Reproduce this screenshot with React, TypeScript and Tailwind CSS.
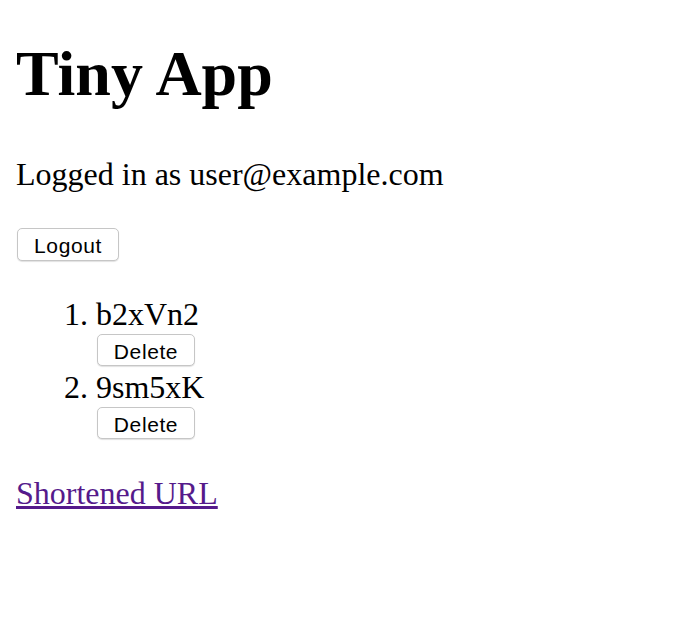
export default function App() {
  const urls = ['b2xVn2', '9sm5xK'];

  return (
    <div className="min-h-screen bg-white px-4 text-black font-['Liberation_Serif',serif] text-[32px] leading-[37px]">
      <h1 className="pt-[37px] text-[64px] font-bold leading-[74px]">Tiny App</h1>

      <p className="mt-[45px]">Logged in as user@example.com</p>

      <button className="mt-[35px] ml-px block h-[33px] w-[102px] rounded-[5px] border border-[#c6c6c6] bg-white pt-[2px] font-['Liberation_Sans',sans-serif] text-[21px] leading-none tracking-[0.6px] text-black shadow-[0_1px_1px_rgba(0,0,0,0.12)]">
        Logout
      </button>

      <ol className="mt-[35px] list-decimal pl-[80px]">
        {urls.map((id, i) => (
          <li key={id} className={i > 0 ? 'mt-[3px]' : ''}>
            <div>{id}</div>
            <button className="mt-px ml-px block h-[32px] w-[98px] rounded-[5px] border border-[#c6c6c6] bg-white pt-[2px] font-['Liberation_Sans',sans-serif] text-[21px] leading-none tracking-[0.6px] text-black shadow-[0_1px_1px_rgba(0,0,0,0.12)]">
              Delete
            </button>
          </li>
        ))}
      </ol>

      <p className="mt-[36px]">
        <a href="#" className="text-[#551a8b] underline">Shortened URL</a>
      </p>
    </div>
  );
}
